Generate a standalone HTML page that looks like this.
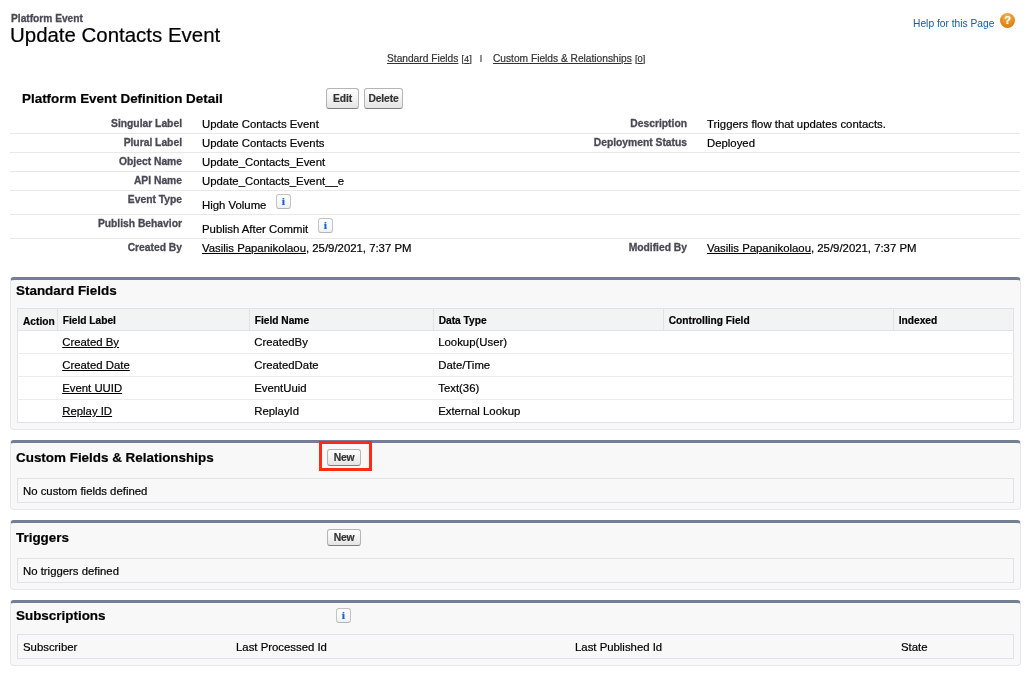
<!DOCTYPE html>
<html lang="en">
<head>
<meta charset="utf-8">
<title>Platform Event: Update Contacts Event</title>
<style>
*{box-sizing:border-box;margin:0;padding:0}
html,body{width:1031px;height:677px;background:#fff;overflow:hidden}
body{font-family:"Liberation Sans",Arial,Helvetica,sans-serif;font-size:11.37px;color:#000;position:relative;will-change:transform;-webkit-text-stroke:.2px currentColor}
.a{position:absolute;white-space:nowrap;line-height:14px}
a{color:#000;text-decoration:underline}
.lbl{font-weight:bold;font-size:10.3px;color:#4a4a56;text-align:right;-webkit-text-stroke:.3px #4a4a56}
.ln{position:absolute;left:10px;width:1010px;height:1px;background:#e8e8e8}
.btn{position:absolute;height:21px;border:1px solid #b5b5b5;border-bottom-color:#7f7f7f;border-radius:3px;background:linear-gradient(#ffffff,#f0f0f0 60%,#e4e4e4);font-weight:bold;font-size:10.3px;letter-spacing:-.15px;color:#333;text-align:center;line-height:19.5px}
.btn.sm{height:17px;line-height:15.5px;font-size:10.3px}
.sec{position:absolute;left:10px;width:1011px;background:#f8f8f8;border:1px solid #e5e7ea;border-top:3px solid #747e96;border-radius:4px}
.sec h3{position:absolute;left:5px;font-size:13.43px;font-weight:bold;line-height:16px;color:#000;white-space:nowrap}
.box{position:absolute;left:6px;width:997px;border:1px solid #e0e3e5;background:#f8f8f8}
.info{position:absolute;width:15px;height:15px;border:1px solid #c4c4c4;border-bottom-color:#b2b2b2;-webkit-text-stroke:0;border-radius:3px;background:linear-gradient(#ffffff,#eef1f6);font-family:"Liberation Serif",serif;font-weight:bold;font-size:10.5px;color:#1a62d4;text-align:center;line-height:13px}
table{position:absolute;left:6px;top:28px;width:997px;border-collapse:collapse;background:#fff;border:1px solid #e0e3e5}
th{background:#f2f3f3;font-size:10.2px;-webkit-text-stroke:.2px #000;font-weight:bold;text-align:left;height:22px;padding:2px 2px 0 5px;border:1px solid #e0e3e5;color:#000}
td{height:23px;padding:0 2px 0 5px;border-top:1px solid #ededed;font-size:11.37px}
.info span{display:inline-block;transform:scaleX(1.3)}
</style>
</head>
<body>
<div class="a" style="left:11px;top:12px;font-weight:bold;font-size:10.2px;color:#4a4a56;-webkit-text-stroke:.3px #4a4a56">Platform Event</div>
<div class="a" style="left:10px;top:22px;font-size:20.45px;line-height:26px">Update Contacts Event</div>
<div class="a" style="left:913px;top:17px;font-size:10.25px;color:#0b60ad;-webkit-text-stroke:0">Help for this Page</div>
<div class="a" id="helpico" style="left:1000px;top:13px;width:15px;height:15px;border-radius:50%;background:radial-gradient(circle at 50% 25%,#f6b24a,#e08a1c 60%,#c8720e);color:#fff;font-weight:bold;font-size:11px;text-align:center;line-height:15px">?</div>

<div class="a" style="left:387px;top:52px;font-size:10.2px;color:#333"><a href="#" style="color:#333">Standard Fields</a></div>
<div class="a" style="left:461.5px;top:52px;font-size:9.3px;color:#333">[<u>4</u>]</div>
<div class="a" style="left:480px;top:50.5px;font-size:7.5px;color:#000;font-weight:bold;transform:scaleX(.7)">|</div>
<div class="a" style="left:493px;top:52px;font-size:10.2px;color:#333"><a href="#" style="color:#333">Custom Fields &amp; Relationships</a></div>
<div class="a" style="left:635px;top:52px;font-size:9.3px;color:#333">[<u>0</u>]</div>

<div class="a" style="left:22px;top:91px;font-size:13.43px;font-weight:bold;line-height:16px">Platform Event Definition Detail</div>
<div class="btn" style="left:326px;top:88px;width:33px">Edit</div>
<div class="btn" style="left:364px;top:88px;width:39px">Delete</div>

<div class="a lbl" style="left:32px;width:150px;top:117px">Singular Label</div>
<div class="a" style="left:202px;top:117px">Update Contacts Event</div>
<div class="a lbl" style="left:537px;width:150px;top:117px">Description</div>
<div class="a" style="left:707px;top:117px">Triggers flow that updates contacts.</div>
<div class="ln" style="top:133px"></div>
<div class="a lbl" style="left:32px;width:150px;top:136px">Plural Label</div>
<div class="a" style="left:202px;top:136px">Update Contacts Events</div>
<div class="a lbl" style="left:537px;width:150px;top:136px">Deployment Status</div>
<div class="a" style="left:707px;top:136px">Deployed</div>
<div class="ln" style="top:152px"></div>
<div class="a lbl" style="left:32px;width:150px;top:155px">Object Name</div>
<div class="a" style="left:202px;top:155px">Update_Contacts_Event</div>
<div class="ln" style="top:171px"></div>
<div class="a lbl" style="left:32px;width:150px;top:174px">API Name</div>
<div class="a" style="left:202px;top:174px">Update_Contacts_Event__e</div>
<div class="ln" style="top:190px"></div>
<div class="a lbl" style="left:32px;width:150px;top:193px">Event Type</div>
<div class="a" style="left:202px;top:198px">High Volume</div>
<div class="info" style="left:276px;top:194px"><span>i</span></div>
<div class="ln" style="top:214px"></div>
<div class="a lbl" style="left:32px;width:150px;top:217px">Publish Behavior</div>
<div class="a" style="left:202px;top:222px">Publish After Commit</div>
<div class="info" style="left:318px;top:218px"><span>i</span></div>
<div class="ln" style="top:238px"></div>
<div class="a lbl" style="left:32px;width:150px;top:241px">Created By</div>
<div class="a" style="left:202px;top:241px"><a href="#">Vasilis Papanikolaou</a>, 25/9/2021, 7:37 PM</div>
<div class="a lbl" style="left:537px;width:150px;top:241px">Modified By</div>
<div class="a" style="left:707px;top:241px"><a href="#">Vasilis Papanikolaou</a>, 25/9/2021, 7:37 PM</div>

<div class="sec" style="top:277px;height:153px">
  <h3 style="top:3px">Standard Fields</h3>
  <table>
    <tr><th style="width:39px;padding-top:4px">Action</th><th style="width:192px">Field Label</th><th style="width:184px">Field Name</th><th style="width:230px">Data Type</th><th style="width:230px">Controlling Field</th><th>Indexed</th></tr>
    <tr><td></td><td><a href="#">Created By</a></td><td>CreatedBy</td><td>Lookup(User)</td><td></td><td></td></tr>
    <tr><td></td><td><a href="#">Created Date</a></td><td>CreatedDate</td><td>Date/Time</td><td></td><td></td></tr>
    <tr><td></td><td><a href="#">Event UUID</a></td><td>EventUuid</td><td>Text(36)</td><td></td><td></td></tr>
    <tr><td></td><td><a href="#">Replay ID</a></td><td>ReplayId</td><td>External Lookup</td><td></td><td></td></tr>
  </table>
</div>

<div class="sec" style="top:440px;height:70px">
  <h3 style="top:7px">Custom Fields &amp; Relationships</h3>
  <div class="btn sm" style="left:316px;top:6px;width:34px">New</div>
  <div class="box" style="top:35px;height:25px"><div class="a" style="left:5px;top:5px">No custom fields defined</div></div>
</div>
<div class="a" style="left:319px;top:441px;width:53px;height:30px;border:3px solid #fc2a18"></div>

<div class="sec" style="top:520px;height:70px">
  <h3 style="top:7px">Triggers</h3>
  <div class="btn sm" style="left:316px;top:6px;width:34px">New</div>
  <div class="box" style="top:35px;height:25px"><div class="a" style="left:5px;top:5px">No triggers defined</div></div>
</div>

<div class="sec" style="top:600px;height:66px">
  <h3 style="top:5px">Subscriptions</h3>
  <div class="info" style="left:325px;top:5px"><span>i</span></div>
  <div class="box" style="top:31px;height:25px">
    <div class="a" style="left:5px;top:5px">Subscriber</div>
    <div class="a" style="left:218px;top:5px">Last Processed Id</div>
    <div class="a" style="left:557px;top:5px">Last Published Id</div>
    <div class="a" style="left:883px;top:5px">State</div>
  </div>
</div>
</body>
</html>
